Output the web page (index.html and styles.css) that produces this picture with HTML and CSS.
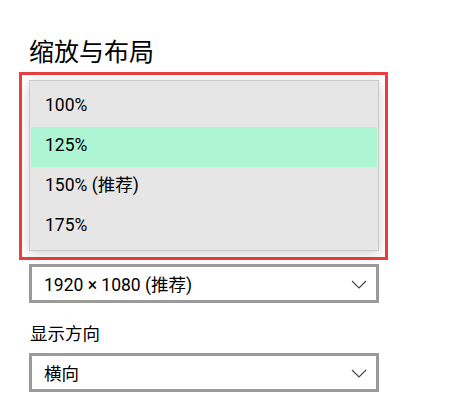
FILE: index.html
```html
<!DOCTYPE html>
<html lang="zh-CN">
<head>
<meta charset="utf-8">
<title>缩放与布局</title>
<link rel="stylesheet" href="styles.css">
</head>
<body>
<div class="page">
  <h1 class="title">缩放与布局</h1>
  <div class="highlight-box">
    <ul class="menu">
      <li class="menu-item">100%</li>
      <li class="menu-item selected">125%</li>
      <li class="menu-item">150% (推荐)</li>
      <li class="menu-item">175%</li>
    </ul>
  </div>
  <div class="select first">
    <span class="select-text">1920 × 1080 (推荐)</span>
    <svg class="chevron" width="16" height="9" viewBox="0 0 16 9"><polyline points="1,1 8,8 15,1" fill="none" stroke="#444" stroke-width="1.1"/></svg>
  </div>
  <div class="label">显示方向</div>
  <div class="select">
    <span class="select-text">横向</span>
    <svg class="chevron" width="16" height="9" viewBox="0 0 16 9"><polyline points="1,1 8,8 15,1" fill="none" stroke="#444" stroke-width="1.1"/></svg>
  </div>
</div>
</body>
</html>
```

FILE: styles.css
```css
html, body {
  margin: 0;
  padding: 0;
  background: #ffffff;
}
body {
  font-family: "Roboto", "Noto Sans CJK SC", sans-serif;
  color: #000000;
}
.page {
  width: 350px;
  padding-left: 29px;
  padding-top: 37px;
}
.title {
  margin: 0 0 3px 0;
  font-size: 25px;
  line-height: 32px;
  font-weight: 400;
}
.highlight-box {
  margin: 0 -9px 0 -10px;
  border: 3px solid #e8403f;
  padding: 5px 6px 6px 7px;
}
.menu {
  list-style: none;
  margin: 0;
  padding: 6px 0 3px 0;
  background: #e6e6e6;
  border: 1px solid #c9c9c9;
  box-shadow: 0 3px 12px rgba(0, 0, 0, 0.18);
}
.menu-item {
  height: 37px;
  line-height: 37px;
  padding: 0 0 3px 14px;
  margin: 0 1px;
  font-size: 17.5px;
}
.menu-item.selected {
  background: #adf5d3;
}
.select {
  display: flex;
  align-items: center;
  justify-content: space-between;
  height: 33px;
  border: 3px solid #9a9a9a;
  background: #fff;
  padding: 0 9px 0 12px;
}
.select.first {
  margin-top: 4px;
}
.select-text {
  font-size: 17.5px;
  line-height: 30px;
  padding-top: 3px;
}
.chevron {
  display: block;
  margin-top: 1px;
}
.label {
  margin: 19px 0 7px 1px;
  font-size: 17.5px;
  line-height: 24px;
}
```
